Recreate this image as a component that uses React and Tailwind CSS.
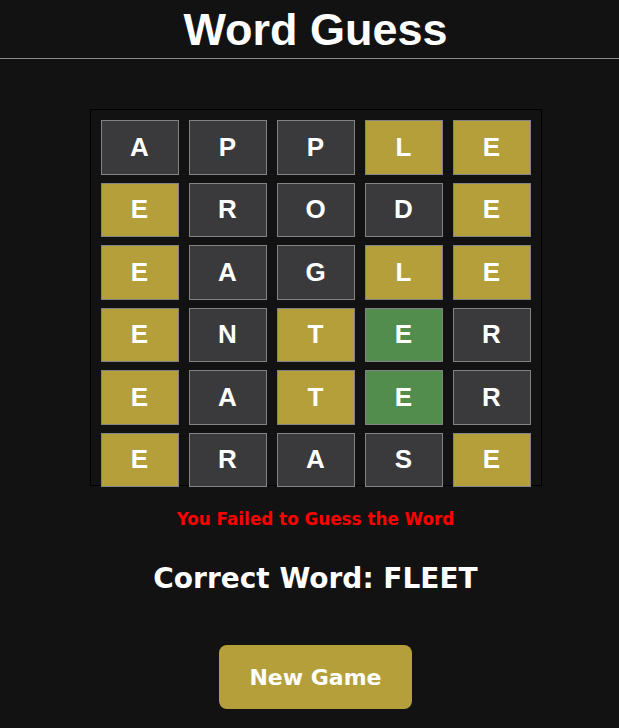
const rows = [
  ["A", "P", "P", "L", "E"],
  ["E", "R", "O", "D", "E"],
  ["E", "A", "G", "L", "E"],
  ["E", "N", "T", "E", "R"],
  ["E", "A", "T", "E", "R"],
  ["E", "R", "A", "S", "E"],
];

// g = correct spot, y = in word, n = not in word
const marks = [
  "nnnyy",
  "ynnny",
  "ynnyy",
  "ynygn",
  "ynygn",
  "ynnny",
];

const tileBg = {
  g: "bg-[#538d4e]",
  y: "bg-[#b59f3b]",
  n: "bg-[#3a3a3c]",
};

const Tile = ({ letter, mark }) => (
  <div
    className={`flex items-center justify-center h-[54.5px] border border-[#818384] text-white text-[26px] font-bold font-['Liberation_Sans',Arial,sans-serif] ${tileBg[mark]}`}
  >
    {letter}
  </div>
);

export default function App() {
  return (
    <div className="min-h-[728px] bg-[#121212]">
      <div className="w-full h-[59px] border-b border-[#8a8a8a] flex items-center justify-center pl-[12px]">
        <h1 className="text-white text-[45px] font-bold leading-none font-['Liberation_Sans',Arial,sans-serif]">
          Word Guess
        </h1>
      </div>

      <div className="flex flex-col items-center pl-[12px] font-['DejaVu_Sans',sans-serif]">
        <div className="mt-[50px] w-[452px] h-[377px] border border-black p-[10px] grid grid-cols-5 gap-x-[10px] gap-y-[8px] content-start">
          {rows.map((row, r) =>
            row.map((letter, c) => (
              <Tile key={`${r}-${c}`} letter={letter} mark={marks[r][c]} />
            ))
          )}
        </div>

        <p className="mt-[21px] text-[#ff0000] text-[16.8px] font-bold leading-6">
          You Failed to Guess the Word
        </p>

        <h2 className="mt-[30px] text-white text-[28px] font-bold leading-[36px]">
          Correct Word: FLEET
        </h2>

        <button className="mt-[48px] w-[193px] h-[64px] rounded-lg bg-[#b59f3b] text-white text-[22px] font-bold">
          New Game
        </button>
      </div>
    </div>
  );
}
